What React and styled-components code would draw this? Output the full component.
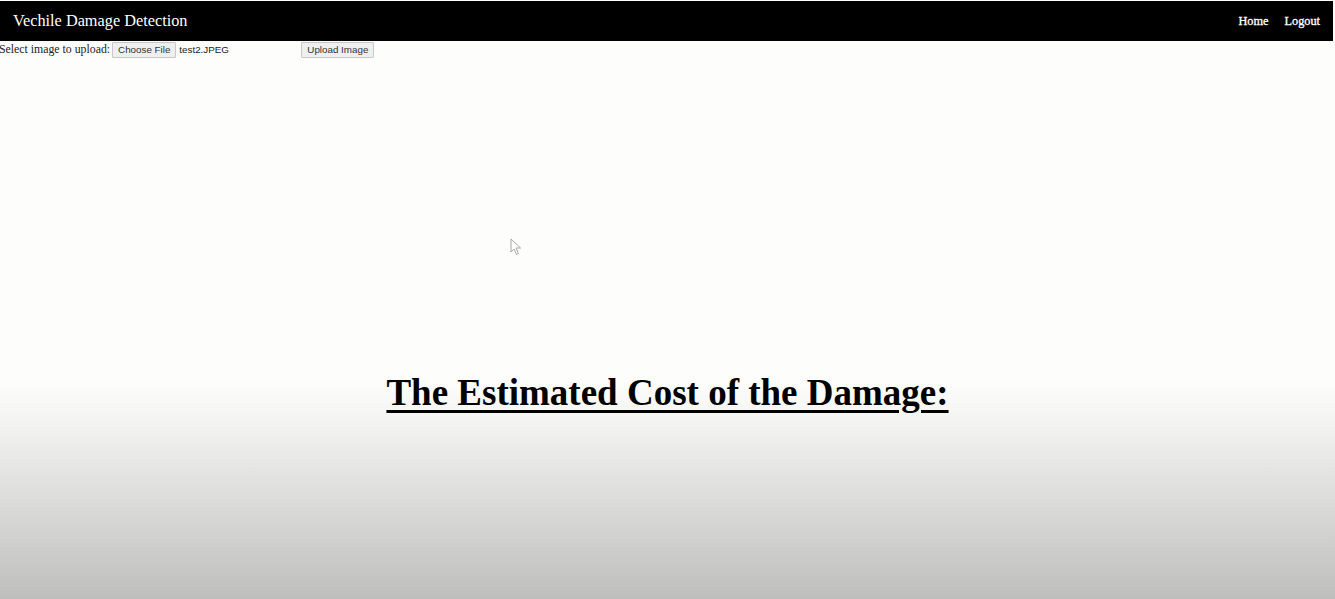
import React from 'react';
import styled, { createGlobalStyle } from 'styled-components';

const GlobalStyle = createGlobalStyle`
  html, body {
    margin: 0;
    padding: 0;
  }
  body {
    font-family: "Liberation Serif", "Times New Roman", serif;
    background: #fdfdfb;
  }
`;

const Page = styled.div`
  position: relative;
  min-height: 100vh;
  overflow: hidden;
  background: linear-gradient(
    to bottom,
    #fdfdfb 0px,
    #fdfdfb 382px,
    #f1f1ef 430px,
    #dcdcda 500px,
    #bebebc 599px
  );
`;

const NavBar = styled.nav`
  display: flex;
  align-items: center;
  justify-content: space-between;
  height: 40px;
  margin-top: 1px;
  margin-right: 2px;
  padding: 0 13px 0 13px;
  background: #000;
  color: #fff;
`;

const Brand = styled.div`
  font-size: 16.3px;
`;

const NavLinks = styled.div`
  display: flex;
  gap: 16px;
`;

const NavLink = styled.a`
  color: #fff;
  font-size: 12.3px;
  text-decoration: none;
  -webkit-text-stroke: 0.3px #fff;
`;

const UploadForm = styled.form`
  display: flex;
  align-items: center;
  height: 17px;
  margin-left: -1px;
  font-size: 11.8px;
  color: #222;
`;

const Label = styled.span`
  margin-right: 2px;
`;

const FormButton = styled.button`
  height: 16px;
  padding: 0 5px;
  font-family: "Liberation Sans", Arial, sans-serif;
  font-size: 9.8px;
  color: #333;
  background: #efefef;
  border: 1px solid #c8c8c8;
  border-radius: 1px;
`;

const FileName = styled.span`
  font-family: "Liberation Sans", Arial, sans-serif;
  font-size: 9.8px;
  color: #222;
  margin-left: 3px;
  width: 122px;
`;

const Result = styled.div`
  display: flex;
  justify-content: center;
  padding-top: 313px;
`;

const Heading = styled.h1`
  margin: 0;
  font-size: 37px;
  font-weight: bold;
  color: #000;
  text-decoration: underline;
  text-decoration-thickness: 3px;
  text-underline-offset: 5px;
`;

const Cursor = styled.svg`
  position: absolute;
  left: 510px;
  top: 238px;
  opacity: 0.5;
`;

export default function App() {
  return (
    <>
      <GlobalStyle />
      <Page>
        <NavBar>
          <Brand>Vechile Damage Detection</Brand>
          <NavLinks>
            <NavLink href="#">Home</NavLink>
            <NavLink href="#">Logout</NavLink>
          </NavLinks>
        </NavBar>
        <UploadForm onSubmit={e => e.preventDefault()}>
          <Label>Select image to upload:</Label>
          <FormButton type="button">Choose File</FormButton>
          <FileName>test2.JPEG</FileName>
          <FormButton type="submit">Upload Image</FormButton>
        </UploadForm>
        <Result>
          <Heading>The Estimated Cost of the Damage:</Heading>
        </Result>
        <Cursor width="12" height="18" viewBox="0 0 12 18">
          <path d="M1 1 L1 14 L4 11 L6.5 16.5 L8.5 15.5 L6 10 L10.5 10 Z" fill="#fff" stroke="#555" strokeWidth="1" />
        </Cursor>
      </Page>
    </>
  );
}
